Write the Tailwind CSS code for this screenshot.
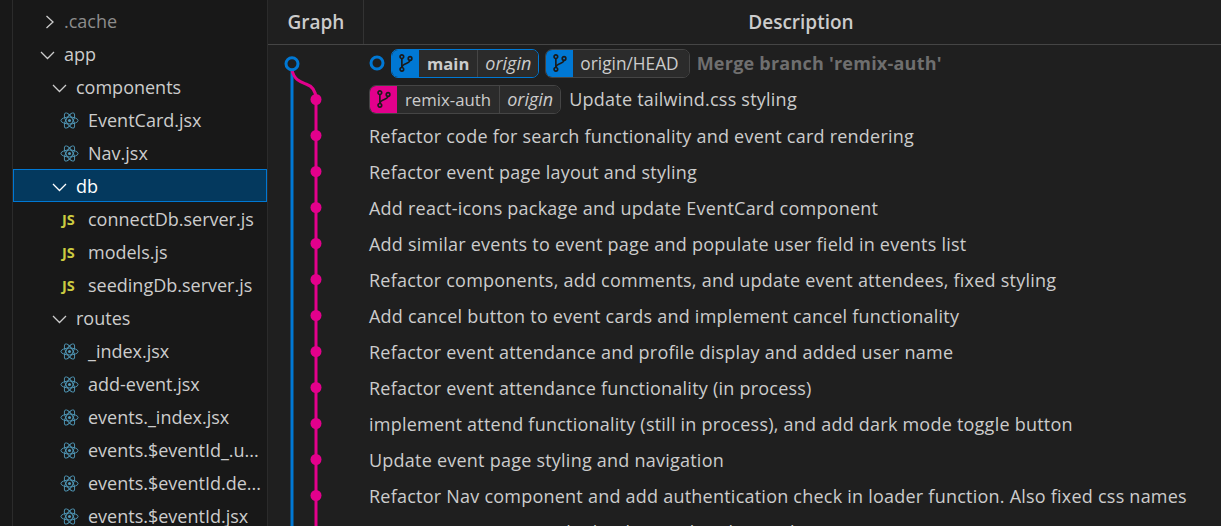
<!DOCTYPE html>
<html lang="en">
<head>
<meta charset="UTF-8">
<title>Git Graph</title>
<script src="https://cdn.jsdelivr.net/npm/@tailwindcss/browser@4"></script>
</head>
<body class="bg-[#1f1f1f]">
<svg class="hidden">
  <symbol id="react" viewBox="0 0 20 20">
    <g fill="none" stroke="#519aba" stroke-width="1">
      <ellipse cx="10" cy="10" rx="9" ry="3.6"/>
      <ellipse cx="10" cy="10" rx="9" ry="3.6" transform="rotate(60 10 10)"/>
      <ellipse cx="10" cy="10" rx="9" ry="3.6" transform="rotate(120 10 10)"/>
    </g>
    <circle cx="10" cy="10" r="1.6" fill="#519aba"/>
  </symbol>
  <symbol id="branch" viewBox="0 0 16 22">
    <g fill="none" stroke="#1a1a1a" stroke-width="1.8">
      <circle cx="4" cy="4" r="2"/>
      <circle cx="4" cy="18" r="2"/>
      <circle cx="13" cy="6" r="2"/>
      <path d="M4 6v10M13 8c0 4-9 3-9 8"/>
    </g>
  </symbol>
</svg>
<div class="flex h-[526px] w-[1221px] overflow-hidden font-['Open_Sans',sans-serif] text-[#cccccc]">

  <!-- Explorer -->
  <aside class="w-[268px] shrink-0 bg-[#181818] border-r border-[#2b2b2b] text-[18px] leading-[33px] pl-[12px]">
    <div class="border-l border-[#2b2b2b] pt-[4px] h-full">
      <div class="flex items-center h-[33px] pt-[2px] pl-[31px] text-[#8c8c8c]">
        <svg class="w-[12px] h-[16px] mr-[8px]" viewBox="0 0 12 16" fill="none" stroke="#cccccc" stroke-width="1.3"><path d="M2.5 2l6.5 6-6.5 6"/></svg>
        <span>.cache</span>
      </div>
      <div class="flex items-center h-[33px] pt-[2px] pl-[27px]">
        <svg class="w-[15px] h-[10px] mr-[9px]" viewBox="0 0 15 10" fill="none" stroke="#cccccc" stroke-width="1.3"><path d="M1 2l6.5 6.5L14 2"/></svg>
        <span>app</span>
      </div>
      <div class="flex items-center h-[33px] pt-[2px] pl-[39px]">
        <svg class="w-[15px] h-[10px] mr-[9px]" viewBox="0 0 15 10" fill="none" stroke="#cccccc" stroke-width="1.3"><path d="M1 2l6.5 6.5L14 2"/></svg>
        <span>components</span>
      </div>
      <div class="flex items-center h-[33px] pt-[2px] pl-[47px]"><svg class="w-[19px] h-[19px] mr-[9px]"><use href="#react"/></svg><span>EventCard.jsx</span></div>
      <div class="flex items-center h-[33px] pt-[2px] pl-[47px]"><svg class="w-[19px] h-[19px] mr-[9px]"><use href="#react"/></svg><span>Nav.jsx</span></div>
      <div class="flex items-center h-[33px] pt-[2px] pl-[38px] bg-[#04395e] border border-[#0078d4] text-white">
        <svg class="w-[15px] h-[10px] mr-[9px]" viewBox="0 0 15 10" fill="none" stroke="#ffffff" stroke-width="1.3"><path d="M1 2l6.5 6.5L14 2"/></svg>
        <span>db</span>
      </div>
      <div class="flex items-center h-[33px] pt-[2px] pl-[49px]"><span class="w-[26px] text-[14.5px] font-bold text-[#cbcb41]">JS</span><span>connectDb.server.js</span></div>
      <div class="flex items-center h-[33px] pt-[2px] pl-[49px]"><span class="w-[26px] text-[14.5px] font-bold text-[#cbcb41]">JS</span><span>models.js</span></div>
      <div class="flex items-center h-[33px] pt-[2px] pl-[49px]"><span class="w-[26px] text-[14.5px] font-bold text-[#cbcb41]">JS</span><span>seedingDb.server.js</span></div>
      <div class="flex items-center h-[33px] pt-[2px] pl-[39px]">
        <svg class="w-[15px] h-[10px] mr-[9px]" viewBox="0 0 15 10" fill="none" stroke="#cccccc" stroke-width="1.3"><path d="M1 2l6.5 6.5L14 2"/></svg>
        <span>routes</span>
      </div>
      <div class="flex items-center h-[33px] pt-[2px] pl-[47px]"><svg class="w-[19px] h-[19px] mr-[9px]"><use href="#react"/></svg><span>_index.jsx</span></div>
      <div class="flex items-center h-[33px] pt-[2px] pl-[47px]"><svg class="w-[19px] h-[19px] mr-[9px]"><use href="#react"/></svg><span>add-event.jsx</span></div>
      <div class="flex items-center h-[33px] pt-[2px] pl-[47px]"><svg class="w-[19px] h-[19px] mr-[9px]"><use href="#react"/></svg><span>events._index.jsx</span></div>
      <div class="flex items-center h-[33px] pt-[2px] pl-[47px]"><svg class="w-[19px] h-[19px] mr-[9px]"><use href="#react"/></svg><span>events.$eventId_.u...</span></div>
      <div class="flex items-center h-[33px] pt-[2px] pl-[47px]"><svg class="w-[19px] h-[19px] mr-[9px]"><use href="#react"/></svg><span>events.$eventId.de...</span></div>
      <div class="flex items-center h-[33px] pt-[2px] pl-[47px]"><svg class="w-[19px] h-[19px] mr-[9px]"><use href="#react"/></svg><span>events.$eventId.jsx</span></div>
    </div>
  </aside>

  <!-- Graph panel -->
  <main class="flex-1 min-w-0 flex flex-col">
    <div class="flex h-[45px] shrink-0 border-b border-[#454545] text-[19px] font-semibold text-[#cccccc]">
      <div class="w-[96px] border-r border-[#333333] flex items-center justify-center pl-px">Graph</div>
      <div class="flex-1 flex items-center justify-center pl-[17px]">Description</div>
    </div>
    <div class="relative flex-1">
      <!-- lines and nodes of the graph -->
      <svg class="absolute left-0 top-0" width="96" height="481" fill="none">
        <path d="M24 25V481" stroke="#0078d4" stroke-width="3"/>
        <path d="M24 25c2 10 9 12 14 14c6 2 10 6 10 15V481" stroke="#e3008c" stroke-width="3"/>
        <circle cx="24" cy="18.7" r="6" fill="#1f1f1f" stroke="#0078d4" stroke-width="3"/>
        <g fill="#e3008c" transform="translate(0 .5)">
          <circle cx="48" cy="54" r="5.5"/><circle cx="48" cy="90" r="5.5"/><circle cx="48" cy="126" r="5.5"/>
          <circle cx="48" cy="162" r="5.5"/><circle cx="48" cy="198" r="5.5"/><circle cx="48" cy="234" r="5.5"/>
          <circle cx="48" cy="270" r="5.5"/><circle cx="48" cy="306" r="5.5"/><circle cx="48" cy="342" r="5.5"/>
          <circle cx="48" cy="378" r="5.5"/><circle cx="48" cy="414" r="5.5"/><circle cx="48" cy="450" r="5.5"/>
          <circle cx="48" cy="486" r="5.5"/>
        </g>
      </svg>
      <div class="pl-[101px] text-[18px] tracking-[0.23px] leading-[38px]">
        <div class="flex items-center h-[36px]">
          <svg class="w-[16px] h-[16px] mr-[6px]" viewBox="0 0 16 16" fill="none"><circle cx="8" cy="8" r="6" stroke="#0078d4" stroke-width="3"/></svg>
          <div class="flex h-[29px] rounded-[7px] border border-[#0078d4] overflow-hidden leading-[27px] mr-[6px] tracking-normal">
            <span class="w-[27px] bg-[#0078d4] flex items-center justify-center"><svg class="w-[15px] h-[20px]"><use href="#branch"/></svg></span>
            <span class="px-[8px] bg-[#2b2b2b] font-bold text-[16.6px]">main</span>
            <span class="pl-[7px] pr-[7px] bg-[#2b2b2b] italic text-[18px] border-l border-[#454545]">origin</span>
          </div>
          <div class="flex h-[29px] rounded-[7px] border border-[#454545] overflow-hidden leading-[27px] mr-[7px] tracking-normal">
            <span class="w-[27px] bg-[#0078d4] flex items-center justify-center"><svg class="w-[15px] h-[20px]"><use href="#branch"/></svg></span>
            <span class="pl-[7px] pr-[10px] bg-[#2b2b2b] text-[17.3px]">origin/HEAD</span>
          </div>
          <span class="font-bold text-[#6f6f6f]">Merge branch 'remix-auth'</span>
        </div>
        <div class="flex items-center h-[36px]">
          <div class="flex h-[29px] rounded-[7px] border border-[#454545] overflow-hidden leading-[27px] mr-[8px] tracking-normal">
            <span class="w-[27px] bg-[#e3008c] flex items-center justify-center"><svg class="w-[15px] h-[20px]"><use href="#branch"/></svg></span>
            <span class="px-[8px] bg-[#2b2b2b] text-[16.8px]">remix-auth</span>
            <span class="pl-[7px] pr-[7px] bg-[#2b2b2b] italic text-[18px] border-l border-[#454545]">origin</span>
          </div>
          <span>Update tailwind.css styling</span>
        </div>
        <div class="h-[36px]">Refactor code for search functionality and event card rendering</div>
        <div class="h-[36px]">Refactor event page layout and styling</div>
        <div class="h-[36px]">Add react-icons package and update EventCard component</div>
        <div class="h-[36px]">Add similar events to event page and populate user field in events list</div>
        <div class="h-[36px]">Refactor components, add comments, and update event attendees, fixed styling</div>
        <div class="h-[36px]">Add cancel button to event cards and implement cancel functionality</div>
        <div class="h-[36px]">Refactor event attendance and profile display and added user name</div>
        <div class="h-[36px]">Refactor event attendance functionality (in process)</div>
        <div class="h-[36px]">implement attend functionality (still in process), and add dark mode toggle button</div>
        <div class="h-[36px]">Update event page styling and navigation</div>
        <div class="h-[36px]">Refactor Nav component and add authentication check in loader function. Also fixed css names</div>
        <div class="h-[36px]">Remove comments in the loaders and update styling</div>
      </div>
    </div>
  </main>
</div>
</body>
</html>
